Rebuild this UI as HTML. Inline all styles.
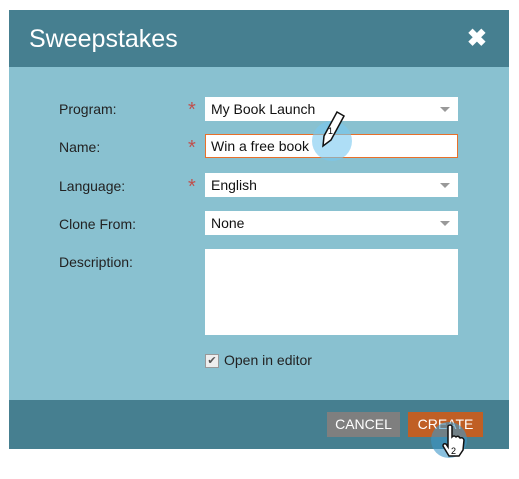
<!DOCTYPE html>
<html><head><style>
body{margin:0;width:519px;height:479px;background:#fff;font-family:"Liberation Sans",sans-serif;position:relative;overflow:hidden}
.d{position:absolute;left:9px;top:10px;width:500px;height:439px;background:#89c1d0}
.h{position:absolute;left:0;top:0;width:500px;height:57px;background:#467f90;color:#fff;font-size:25px}
.h span{position:absolute;left:20px;top:15px}
.x{position:absolute;right:22px;top:14px;font-size:24px;font-weight:bold}
.f{position:absolute;left:0;top:390px;width:500px;height:49px;background:#467f90}
.l{position:absolute;left:50px;font-size:14px;color:#222}
.s{position:absolute;left:179px;color:#c0504d;font-size:20px}
.i{position:absolute;left:196px;width:253px;height:24px;background:#fff;font-size:14px;box-sizing:border-box;padding:4px 6px;color:#111}
.a{position:absolute;right:8px;top:10px;border-left:5px solid transparent;border-right:5px solid transparent;border-top:5px solid #999}
.b{position:absolute;top:402px;height:25px;color:#fff;font-size:14px;text-align:center;line-height:25px}
</style></head><body>
<div class="d">
<div class="h"><span>Sweepstakes</span><div class="x">✖</div></div>
<div class="l" style="top:91px">Program:</div><div class="s" style="top:89px">*</div>
<div class="i" style="top:87px">My Book Launch<div class="a"></div></div>
<div class="l" style="top:129px">Name:</div><div class="s" style="top:127px">*</div>
<div class="i" style="top:124px;border:1px solid #e8702a;border-color:#e8702a #e8702a #e8702a #e8702a;padding:3px 5px">Win a free book</div>
<div class="l" style="top:168px">Language:</div><div class="s" style="top:166px">*</div>
<div class="i" style="top:163px">English<div class="a"></div></div>
<div class="l" style="top:206px">Clone From:</div>
<div class="i" style="top:201px">None<div class="a"></div></div>
<div class="l" style="top:244px">Description:</div>
<div class="i" style="top:239px;height:86px"></div>
<div style="position:absolute;left:196px;top:344px;width:12px;height:12px;background:#eee;border:1px solid #999;font-size:11px;line-height:12px;text-align:center;color:#555">✔</div>
<div class="l" style="left:215px;top:342px;font-size:14px">Open in editor</div>
<div style="position:absolute;left:303px;top:111px;width:40px;height:40px;border-radius:50%;background:rgba(120,200,240,.6)"></div>
<svg style="position:absolute;left:308px;top:100px" width="30" height="40" viewBox="0 0 30 40"><path d="M20 2 L27 6 L14 30 L6 36 L7 26 Z" fill="#fff" stroke="#111" stroke-width="1.5"/><text x="11" y="24" font-size="9" font-family="Liberation Sans">1</text></svg>
<div class="f"></div>
<div class="b" style="left:318px;width:73px;background:#7f7f7f">CANCEL</div>
<div class="b" style="left:399px;width:75px;background:#c05f25">CREATE</div>
<div style="position:absolute;left:422px;top:412px;width:36px;height:36px;border-radius:50%;background:rgba(60,150,200,.6)"></div>
<svg style="position:absolute;left:433px;top:414px" width="24" height="34" viewBox="0 0 24 34"><path d="M6 2 Q8 0 10 2 L10 13 Q12 11 14 13 Q16 11 18 14 Q21 13 22 16 L21 26 L17 32 L7 32 L1 22 Q1 19 4 20 L6 23 Z" fill="#fff" stroke="#111" stroke-width="1.5"/><text x="9" y="30" font-size="9" font-family="Liberation Sans">2</text></svg>
</div>
</body></html>
